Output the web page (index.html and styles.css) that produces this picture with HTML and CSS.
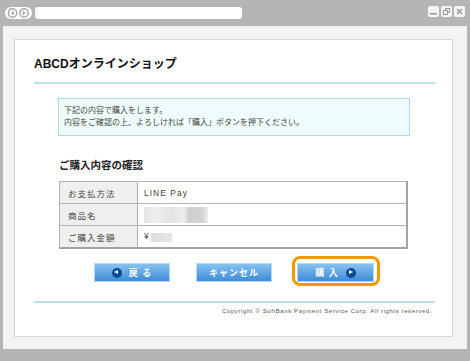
FILE: index.html
```html
<!DOCTYPE html>
<html lang="ja">
<head>
    <meta charset="UTF-8">
    <title>ABCDオンラインショップ</title>
    <link rel="stylesheet" href="styles.css">
</head>
<body>
    <div class="browser">
        <div class="toolbar">
            <svg class="nav" width="27" height="12" viewBox="0 0 27 12">
                <rect x="0" y="0" width="27" height="12" rx="6" fill="#fff"/>
                <circle cx="7.5" cy="6" r="4.2" fill="none" stroke="#a8a8a8" stroke-width="1.4"/>
                <path d="M8.8 3.8 L5.8 6 L8.8 8.2 Z" fill="#a8a8a8"/>
                <circle cx="19" cy="6" r="4.2" fill="none" stroke="#a8a8a8" stroke-width="1.4"/>
                <path d="M17.7 3.8 L20.7 6 L17.7 8.2 Z" fill="#a8a8a8"/>
            </svg>
            <div class="address"></div>
            <div class="controls">
                <svg width="11" height="11" viewBox="0 0 11 11">
                    <rect width="11" height="11" rx="2" fill="#f4f4f4"/>
                    <rect x="2" y="7" width="7" height="1.6" fill="#9a9a9a"/>
                </svg>
                <svg width="11" height="11" viewBox="0 0 11 11">
                    <rect width="11" height="11" rx="2" fill="#f4f4f4"/>
                    <rect x="4.5" y="2.5" width="4" height="4" fill="none" stroke="#9a9a9a"/>
                    <rect x="2.5" y="4.5" width="4" height="4" fill="#f4f4f4" stroke="#9a9a9a"/>
                </svg>
                <svg width="11" height="11" viewBox="0 0 11 11">
                    <rect width="11" height="11" rx="2" fill="#f4f4f4"/>
                    <path d="M3 3 L8 8 M8 3 L3 8" stroke="#9a9a9a" stroke-width="1.6"/>
                </svg>
            </div>
        </div>

        <div class="viewport">
            <div class="page">
                <h1 class="shop-title">ABCDオンラインショップ</h1>

                <div class="notice">
                    下記の内容で購入をします。<br>
                    内容をご確認の上、よろしければ「購入」ボタンを押下ください。
                </div>

                <h2 class="section-title">ご購入内容の確認</h2>

                <table class="summary">
                    <tr>
                        <th>お支払方法</th>
                        <td>LINE Pay</td>
                    </tr>
                    <tr>
                        <th>商品名</th>
                        <td><span class="blur blur-name"></span></td>
                    </tr>
                    <tr>
                        <th>ご購入金額</th>
                        <td>¥<span class="blur blur-price"></span></td>
                    </tr>
                </table>

                <div class="actions">
                    <a class="btn btn-back"><span class="icon icon-left"></span>戻 る</a>
                    <a class="btn btn-cancel">キャンセル</a>
                    <a class="btn btn-buy">購 入<span class="icon icon-right"></span></a>
                </div>

                <div class="footer">
                    Copyright © SoftBank Payment Service Corp. All rights reserved.
                </div>
            </div>
        </div>
    </div>
</body>
</html>
```

FILE: styles.css
```css
body {
    margin: 0;
    background-color: #b5b5b5;
    font-family: "Liberation Sans", "Noto Sans CJK JP", sans-serif;
    color: #333;
}

.browser {
    width: 470px;
    height: 361px;
}

.toolbar {
    display: flex;
    align-items: flex-start;
    height: 26px;
    box-sizing: border-box;
    padding: 7px 5px 0 5px;
}

.nav {
    display: block;
}

.address {
    width: 207px;
    height: 12px;
    margin-left: 3px;
    background-color: #fff;
    border-radius: 3px;
}

.controls {
    display: flex;
    gap: 2px;
    margin-left: auto;
    margin-top: -1px;
}

.controls svg {
    display: block;
}

.viewport {
    margin: 0 3px;
    height: 323px;
    box-sizing: border-box;
    padding: 13px 14px 0 11px;
    background-color: #f3f3f3;
}

.page {
    width: 439px;
    height: 298px;
    box-sizing: border-box;
    padding: 0 17px 0 19px;
    background-color: #fff;
    border: 1px solid #d6d6d6;
}

.shop-title {
    margin: 0;
    padding: 16px 0 10px 0;
    font-size: 12px;
    line-height: 16px;
    font-weight: bold;
    color: #111;
    border-bottom: 2px solid #bde0e8;
}

.notice {
    width: 352px;
    box-sizing: border-box;
    margin: 14px 0 0 24px;
    padding: 6px 5px;
    font-size: 8px;
    line-height: 12px;
    color: #444;
    background-color: #effdff;
    border: 1px solid #a9dbe6;
}

.section-title {
    margin: 22px 0 9px 25px;
    font-size: 10.5px;
    line-height: 14px;
    font-weight: bold;
    color: #222;
}

.summary {
    width: 349px;
    margin-left: 25px;
    border-collapse: collapse;
    border: 1px solid #a3a3a3;
    border-right-width: 2px;
    border-bottom-width: 2px;
    font-size: 8.5px;
    letter-spacing: 1px;
    color: #444;
}

.summary th,
.summary td {
    height: 21px;
    padding: 0 0 0 8px;
    border: 1px solid #b3b3b3;
    text-align: left;
    font-weight: normal;
}

.summary th {
    width: 69px;
    background-color: #efefef;
}

.summary td {
    padding-left: 6px;
}

.blur {
    display: inline-block;
    vertical-align: middle;
}

.blur-name {
    width: 64px;
    height: 16px;
    background: linear-gradient(90deg, #e6e6e6 0, #eeeeee 12px, #e3e3e3 26px, #ececec 40px, #cfcfcf 45px, #d3d3d3 58px, #eeeeee 64px);
}

.blur-price {
    width: 21px;
    height: 9px;
    margin-left: 1px;
    background: linear-gradient(90deg, #dcdcdc, #e6e6e6);
}

.actions {
    display: flex;
    margin: 14px 0 0 60px;
}

.btn {
    position: relative;
    display: flex;
    align-items: center;
    justify-content: center;
    gap: 7px;
    width: 76px;
    height: 19px;
    box-sizing: border-box;
    margin-right: 26px;
    border: 1px solid #b6d8f4;
    background: linear-gradient(#86c3f0, #3f8bd8);
    color: #fff;
    font-size: 9px;
    font-weight: bold;
    letter-spacing: 1px;
    cursor: pointer;
}

.btn-cancel {
    margin-right: 25px;
}

.btn-buy {
    width: 77px;
    margin-right: 0;
}

.btn-buy::after {
    content: "";
    position: absolute;
    top: -8px;
    left: -6px;
    right: -7px;
    bottom: -5px;
    border: 3px solid #f39800;
    border-radius: 8px;
}

.icon {
    position: relative;
    width: 10px;
    height: 10px;
    border-radius: 50%;
    background-color: #0c4a94;
}

.icon::before {
    content: "";
    position: absolute;
    top: 2.5px;
    border-top: 2.5px solid transparent;
    border-bottom: 2.5px solid transparent;
}

.icon-left::before {
    left: 2.5px;
    border-right: 4px solid #fff;
}

.icon-right::before {
    left: 3.5px;
    border-left: 4px solid #fff;
}

.footer {
    margin-top: 19px;
    border-top: 2px solid #bde0e8;
    padding: 3px 3px 0 0;
    font-size: 6px;
    line-height: 10px;
    letter-spacing: 0.6px;
    text-align: right;
    color: #555;
}
```
